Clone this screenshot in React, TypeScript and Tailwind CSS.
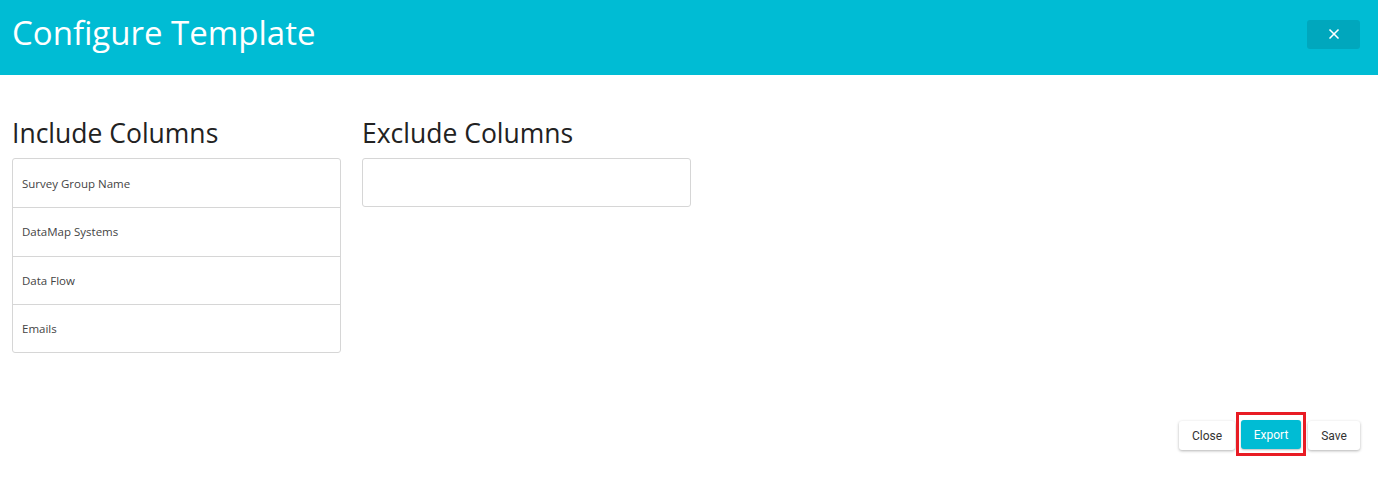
import { X } from "lucide-react"

export default function App() {
  const included = ["Survey Group Name", "DataMap Systems", "Data Flow", "Emails"]

  return (
    <div className="w-[1378px] h-[483px] bg-white font-['Open_Sans',sans-serif]">
      <header className="h-[75px] bg-[#00bcd4] flex items-center justify-between pl-3 pr-[18px]">
        <h1 className="text-[33px] leading-none text-white pb-[10px]">Configure Template</h1>
        <button className="w-[53px] h-[29px] rounded-[3px] bg-[#00a7bd] flex items-center justify-center mb-[7px]">
          <X className="w-[16px] h-[16px] text-white" strokeWidth={2.5} />
        </button>
      </header>

      <div className="flex gap-[21px] pl-3 pt-[40px]">
        <section className="w-[329px]">
          <h2 className="text-[26.5px] leading-[36px] text-[#222] mb-[7px]">Include Columns</h2>
          <ul className="border border-[#d6d6d6] rounded-[3px]">
            {included.map((name, i) => (
              <li
                key={name}
                className={`h-[48.25px] flex items-center px-[9px] text-[11.5px] text-[#444] ${i > 0 ? "border-t border-[#d6d6d6]" : ""}`}
              >
                {name}
              </li>
            ))}
          </ul>
        </section>
        <section className="w-[329px]">
          <h2 className="text-[26.5px] leading-[36px] text-[#222] mb-[7px]">Exclude Columns</h2>
          <div className="h-[49px] border border-[#d6d6d6] rounded-[3px]" />
        </section>
      </div>

      <div className="flex justify-end items-center pr-[18px] mt-[59px] font-['Roboto',sans-serif] text-[12px]">
        <button className="h-[29px] w-[56px] mt-[3px] rounded-[3px] bg-white text-[#333] shadow-[0_1px_3px_rgba(0,0,0,0.3)]">Close</button>
        <div className="border-[3px] border-[#e81c24] pt-[5px] pb-[4px] px-[2px] ml-[1px]">
          <button className="h-[29px] w-[60px] rounded-[3px] bg-[#00bcd4] text-white shadow-[0_1px_2px_rgba(0,0,0,0.25)]">Export</button>
        </div>
        <button className="h-[29px] w-[52px] mt-[3px] ml-[2px] rounded-[3px] bg-white text-[#333] shadow-[0_1px_3px_rgba(0,0,0,0.3)]">Save</button>
      </div>
    </div>
  )
}
